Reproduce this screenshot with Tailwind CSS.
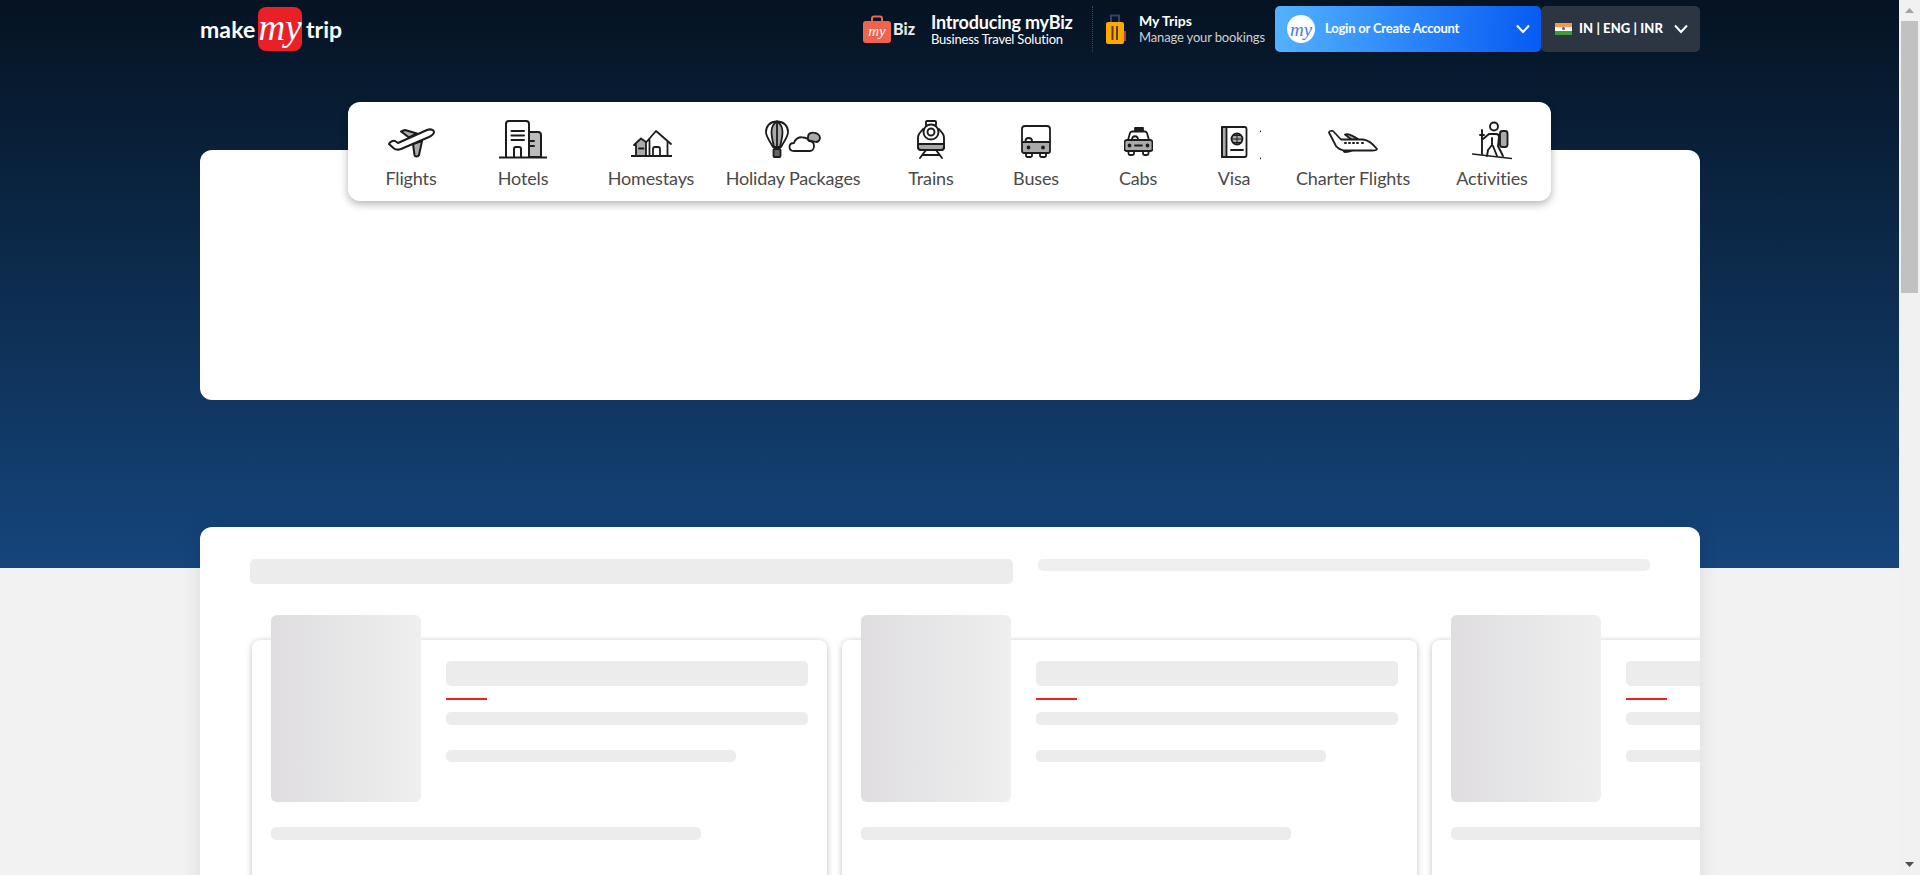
<!DOCTYPE html>
<html lang="en">
<head>
<meta charset="utf-8">
<title>MakeMyTrip</title>
<script src="https://cdn.jsdelivr.net/npm/@tailwindcss/browser@4"></script>
</head>
<body class="overflow-hidden font-['Lato','Noto_Sans',sans-serif]">
<div class="flex h-[875px] w-[1920px] overflow-hidden">
  <main class="h-full w-[1899px] flex-none overflow-hidden bg-[linear-gradient(to_bottom,#051322_0px,#15457c_568px,#f2f2f2_568px)]">
    <div class="ml-[200px] w-[1500px]">
      <header class="flex h-[58px] items-center">
        <a class="flex w-[141px] flex-none items-center text-white">
          <span class="w-[58px] flex-none text-[23px] font-bold leading-none tracking-[0.1px]">make</span>
          <span class="flex h-[44px] w-[44px] flex-none items-center justify-center rounded-[8px] bg-[#eb2026] pb-[3px] font-['Liberation_Serif',serif] text-[37px] font-normal italic leading-none">my</span>
          <span class="ml-[4px] text-[23px] font-bold leading-none">trip</span>
        </a>
        <div class="ml-[522px] flex w-[229px] flex-none items-center">
          <div class="relative h-[28px] w-[28px] flex-none">
            <svg width="28" height="28" viewBox="0 0 28 28"><path d="M9 7V3.500A2 2 0 0 1 11 1.500H17A2 2 0 0 1 19 3.500V7" fill="none" stroke="#f0624e" stroke-width="2"/><rect y="6" width="28" height="22" rx="3" fill="#f0644f"/></svg>
            <span class="absolute inset-x-0 top-[7px] text-center font-['Liberation_Serif',serif] text-[15px] italic leading-[18px] text-white">my</span>
          </div>
          <span class="ml-[2px] w-[38px] flex-none text-[16px] font-black leading-none text-[#e8e8e8]">Biz</span>
          <div class="text-white">
            <div class="text-[18px] font-bold leading-[20px] tracking-[-0.2px] whitespace-nowrap">Introducing myBiz</div>
            <div class="text-[13px] leading-[14px] tracking-[-0.2px] whitespace-nowrap">Business Travel Solution</div>
          </div>
        </div>
        <div class="h-[46px] flex-none border-l border-dotted border-[#3c4a5c]"></div>
        <div class="ml-[13px] flex w-[169px] flex-none items-center">
          <svg class="flex-none" width="20" height="30" viewBox="0 0 20 30"><path d="M5 9V1.500H13V9" fill="none" stroke="#3b3f63" stroke-width="2"/><rect x="18" y="17" width="2" height="10" fill="#b5443c"/><rect y="8" width="18" height="22" rx="2" fill="#fca800"/><path d="M6.500 12V26M11 12V26" stroke="#5a3e1a" stroke-width="2"/></svg>
          <div class="ml-[13px] whitespace-nowrap">
            <div class="text-[14px] font-bold leading-[16px] text-white">My Trips</div>
            <div class="text-[13px] leading-[16px] tracking-[-0.15px] text-[#cfcfcf]">Manage your bookings</div>
          </div>
        </div>
        <button class="flex h-[46px] w-[266px] flex-none items-center rounded-[5px] bg-[linear-gradient(93deg,#53b2fe,#065af3)] pl-[12px] pr-[11px] text-white">
          <span class="flex h-[28px] w-[28px] items-center justify-center rounded-full bg-white font-['Liberation_Serif',serif] text-[19px] italic leading-none text-[#3f80e8]">my</span>
          <span class="ml-[10px] text-[13px] font-bold tracking-[-0.2px]">Login or Create Account</span>
          <svg class="ml-auto" width="14" height="10" viewBox="0 0 14 10"><path d="M1 1.500L7 8L13 1.500" fill="none" stroke="#fff" stroke-width="2"/></svg>
        </button>
        <button class="flex h-[46px] w-[159px] flex-none items-center rounded-[5px] bg-[#2c3642] pl-[14px] text-white">
          <span class="flex h-[13px] w-[17px] flex-col">
            <span class="h-1/3 bg-[#f2994a]"></span>
            <span class="flex h-1/3 items-center justify-center bg-white"><span class="h-[3px] w-[3px] rounded-full bg-[#4a5aa8]"></span></span>
            <span class="h-1/3 bg-[#3f9a3c]"></span>
          </span>
          <span class="ml-[7px] text-[13px] font-black tracking-[0.1px] whitespace-nowrap">IN | ENG | INR</span>
          <svg class="ml-[11px]" width="14" height="10" viewBox="0 0 14 10"><path d="M1 1.500L7 8L13 1.500" fill="none" stroke="#fff" stroke-width="2"/></svg>
        </button>
      </header>

      <nav class="relative z-10 mt-[44px] ml-[148px] -mb-[51px] flex h-[99px] w-[1203px] rounded-[12px] bg-white pt-[18px] text-[18px] leading-[24px] tracking-[-0.15px] text-[#4a4a4a] shadow-[0_3px_8px_rgba(0,0,0,0.3)]">
        <a class="flex w-[126px] flex-col items-center whitespace-nowrap">
          <svg width="48" height="40" viewBox="0 0 48 40" fill="none" stroke="#1c1c1c" stroke-width="2" stroke-linejoin="round" stroke-linecap="round">
            <path d="M14 11.500L18 10L30 13.500L22 17.500Z" fill="#aaa"/>
            <path d="M26 24L35 21L32 35C31 37 28 37 27.500 35Z" fill="#aaa"/>
            <path d="M2 24C3 22 6 20 8 21L11 23L40 10C44 8.500 47 10 47 12C47 14 45 15.500 42 17L14 29C11 30 9 30 7 28.500Z" fill="#fff"/>
          </svg>
          <span class="mt-[6px]">Flights</span>
        </a>
        <a class="flex w-[98px] flex-col items-center whitespace-nowrap">
          <svg width="48" height="40" viewBox="0 0 48 40" fill="none" stroke="#1c1c1c" stroke-width="2" stroke-linecap="round">
            <path d="M30 12H39A3 3 0 0 1 42 15V37H30Z" fill="#bbb"/>
            <path d="M7 37V4A3 3 0 0 1 10 1H27A3 3 0 0 1 30 4V37" fill="#fff"/>
            <path d="M12.500 11H25M12.500 15.500H25M12.500 20H25M31 21H35M31 26H35"/>
            <path d="M15 37V29A2 2 0 0 1 17 27H20A2 2 0 0 1 22 29V37"/>
            <path d="M.5 37.500H47.500"/>
          </svg>
          <span class="mt-[6px]">Hotels</span>
        </a>
        <a class="flex w-[158px] flex-col items-center whitespace-nowrap">
          <svg width="41" height="40" viewBox="0 0 41 40" fill="none" stroke="#1c1c1c" stroke-width="1.800" stroke-linecap="round" stroke-linejoin="round">
            <path d="M5 36V25H3L10 18.500L15 22V36Z" fill="#aaa"/>
            <path d="M8 28.500H12.500"/>
            <path d="M15 22.500L25 11L40 24M18.500 20V36M36.500 21V36"/>
            <path d="M22 36V29A2 2 0 0 1 24 27H27A2 2 0 0 1 29 29V36"/>
            <path d="M.5 36H40.500" stroke-width="2"/>
          </svg>
          <span class="mt-[6px]">Homestays</span>
        </a>
        <a class="flex w-[126px] flex-col items-center whitespace-nowrap">
          <svg width="56" height="40" viewBox="0 0 56 40" fill="none" stroke="#1c1c1c" stroke-width="1.800" stroke-linecap="round" stroke-linejoin="round">
            <path d="M12 1.500C5 1.500 1 6 1 12C1 17 5 21 8 27H16C19 21 23 17 23 12C23 6 19 1.500 12 1.500Z"/>
            <path d="M12 1.500C7.500 4 6.500 8 6.500 12C6.500 17 8 22 9 27H15C16 22 17.500 17 17.500 12C17.500 8 16.500 4 12 1.500Z" fill="#aaa"/>
            <path d="M12 1.500V27"/>
            <rect x="8.500" y="29" width="7" height="8" rx="1" fill="#666"/>
            <path d="M43 17C43 13 47 12 50 13C52 13 55 15 55 18C55 20 53 22 51 22L43 20Z" fill="#aaa"/>
            <path d="M29 31C26 31 24.500 29 24.500 27C24.500 24 27 23 29 23C30 19 34 16.500 38 17.500C41 17.500 43 19 44 21C47 21 49 23 49 26C49 29 47 31 45 31Z" fill="#fff"/>
          </svg>
          <span class="mt-[6px]">Holiday Packages</span>
        </a>
        <a class="flex w-[150px] flex-col items-center whitespace-nowrap">
          <svg width="28" height="40" viewBox="0 0 28 40" fill="none" stroke="#1c1c1c" stroke-width="1.900" stroke-linecap="round" stroke-linejoin="round">
            <path d="M9 5V2A1 1 0 0 1 10 1H18A1 1 0 0 1 19 2V5"/>
            <path d="M6 9L2 14C1.500 15 1 17 1 18V27A3 3 0 0 0 4 30H24A3 3 0 0 0 27 27V18C27 17 26.500 15 26 14L22 9"/>
            <path d="M1 24H27V27A3 3 0 0 1 24 30H4A3 3 0 0 1 1 27Z" fill="#aaa"/>
            <circle cx="14" cy="12" r="7.500" fill="#fff"/>
            <circle cx="14" cy="12" r="3.500"/>
            <path d="M9 30L3 38M19 30L25 38M6.500 35H21.500"/>
          </svg>
          <span class="mt-[6px]">Trains</span>
        </a>
        <a class="flex w-[60px] flex-col items-center whitespace-nowrap">
          <svg width="30" height="40" viewBox="0 0 30 40" fill="none" stroke="#1c1c1c" stroke-width="1.800" stroke-linecap="round" stroke-linejoin="round">
            <path d="M5 33V36A1.500 1.500 0 0 0 6.500 37H10A1.500 1.500 0 0 0 11 36V33M19 33V36A1.500 1.500 0 0 0 20.500 37H24A1.500 1.500 0 0 0 25 36V33"/>
            <path d="M1 22H29V31A2 2 0 0 1 27 33H3A2 2 0 0 1 1 31Z" fill="#aaa"/>
            <path d="M1 22V9A3 3 0 0 1 4 6H26A3 3 0 0 1 29 9V22"/>
            <path d="M4.500 22V21C4.500 17 11 17 11 21V22"/>
            <circle cx="7.500" cy="27.500" r="1" fill="#1c1c1c"/><circle cx="22" cy="27.500" r="1" fill="#1c1c1c"/>
          </svg>
          <span class="mt-[6px]">Buses</span>
        </a>
        <a class="flex w-[144px] flex-col items-center whitespace-nowrap">
          <svg width="29" height="40" viewBox="0 0 29 40" fill="none" stroke="#1c1c1c" stroke-width="1.800" stroke-linecap="round" stroke-linejoin="round">
            <rect x="11" y="8" width="8" height="3" fill="#1c1c1c"/>
            <path d="M4.500 31V33.500A1.500 1.500 0 0 0 6 35H8.500A1.500 1.500 0 0 0 10 33.500V31M19 31V33.500A1.500 1.500 0 0 0 20.500 35H23A1.500 1.500 0 0 0 24.500 33.500V31"/>
            <path d="M4 20L6 13A2.500 2.500 0 0 1 8.500 11.500H20.500A2.500 2.500 0 0 1 23 13L25 20"/>
            <path d="M3 20H26A2.500 2.500 0 0 1 28.500 22.500V29A2 2 0 0 1 26.500 31H2.500A2 2 0 0 1 .5 29V22.500A2.500 2.500 0 0 1 3 20Z" fill="#aaa"/>
            <path d="M8 20C8 15 14 15 14 20M11 25.500H18"/>
            <circle cx="5.500" cy="25.500" r="1" fill="#1c1c1c"/><circle cx="23.500" cy="25.500" r="1" fill="#1c1c1c"/>
          </svg>
          <span class="mt-[6px]">Cabs</span>
        </a>
        <a class="flex w-[48px] flex-col items-center whitespace-nowrap">
          <svg class="overflow-visible" width="27" height="40" viewBox="0 0 27 40" fill="none" stroke="#1c1c1c" stroke-width="1.800" stroke-linecap="round" stroke-linejoin="round">
            <rect x="1" y="7" width="4.500" height="30" fill="#aaa"/>
            <path d="M1 7H23.500A2 2 0 0 1 25.500 9V35A2 2 0 0 1 23.500 37H1Z"/>
            <circle cx="16" cy="19" r="5.500" fill="#aaa"/>
            <path d="M10.500 19H21.500M16 13.500V24.500M12 15.500H20M12 22.500H20" stroke-width="1"/>
            <path d="M10 30H22"/>
            <path d="M39.500 11V11.800M39.500 38V38.800" stroke-width="1"/>
          </svg>
          <span class="mt-[6px]">Visa</span>
        </a>
        <a class="flex w-[190px] flex-col items-center whitespace-nowrap">
          <svg width="50" height="40" viewBox="0 0 50 40" fill="none" stroke="#1c1c1c" stroke-width="1.800" stroke-linecap="round" stroke-linejoin="round">
            <path d="M17 14.500C19 13.500 22 14 30 19L24 20Z" fill="#aaa"/>
            <path d="M16 27L30 26C28 29 22 32 17 32C15 32 15 29 16 27Z" fill="#aaa"/>
            <path d="M1 12.500C1 11 3 10.500 5 11L13 19.500H35C40 20 45 24 49 29C49 30 47 30.500 44 30.500H18C13 30.500 10 28.500 8 26Z" fill="#fff"/>
            <path d="M17 23H18M21 23H22M25 23H26M29 23H30M34 23H35" stroke-width="2"/>
          </svg>
          <span class="mt-[6px]">Charter Flights</span>
        </a>
        <a class="flex w-[88px] flex-col items-center whitespace-nowrap">
          <svg width="40" height="40" viewBox="0 0 40 40" fill="none" stroke="#1c1c1c" stroke-width="1.900" stroke-linecap="round" stroke-linejoin="round">
            <rect x="28" y="11" width="7.500" height="16" rx="2.500" fill="#aaa"/>
            <circle cx="22" cy="6.500" r="4"/>
            <path d="M10 10V34M8 15H12"/>
            <path d="M11 19L17 14H24C26 14 27 15 27 17L26 26L31 36M20 18V25L16 30L15 36M21 26L25 36"/>
            <path d="M.5 34L39.500 38.500" stroke-width="1.500"/>
          </svg>
          <span class="mt-[6px]">Activities</span>
        </a>
      </nav>

      <section class="h-[250px] rounded-[12px] bg-white"></section>

      <section class="mt-[127px] h-[700px] overflow-hidden rounded-[12px] bg-white pt-[32px] shadow-[0_0_20px_rgba(0,0,0,0.1)]">
        <div class="ml-[50px] flex items-start">
          <div class="h-[25px] w-[763px] rounded-[5px] bg-[#ececec]"></div>
          <div class="ml-[25px] h-[12px] w-[612px] rounded-[5px] bg-[#efefef]"></div>
        </div>
        <div class="mt-[56px] flex gap-[15px] pl-[52px]">
          <article class="h-[300px] w-[575px] flex-none rounded-[8px] bg-white pl-[19px] shadow-[0_1px_6px_rgba(0,0,0,0.25)]">
            <div class="flex">
              <div class="-mt-[25px] h-[187px] w-[150px] flex-none rounded-[6px] bg-[linear-gradient(90deg,#dfdde0,#efefef)]"></div>
              <div class="ml-[25px] w-[362px] pt-[21px]">
                <div class="h-[25px] rounded-[5px] bg-[#ececec]"></div>
                <div class="mt-[12px] h-[2px] w-[41px] bg-[#eb2026]"></div>
                <div class="mt-[12px] h-[13px] rounded-[5px] bg-[#ececec]"></div>
                <div class="mt-[25px] h-[12px] w-[290px] rounded-[5px] bg-[#ececec]"></div>
              </div>
            </div>
            <div class="mt-[25px] h-[13px] w-[430px] rounded-[5px] bg-[#ececec]"></div>
          </article>
          <article class="h-[300px] w-[575px] flex-none rounded-[8px] bg-white pl-[19px] shadow-[0_1px_6px_rgba(0,0,0,0.25)]">
            <div class="flex">
              <div class="-mt-[25px] h-[187px] w-[150px] flex-none rounded-[6px] bg-[linear-gradient(90deg,#dfdde0,#efefef)]"></div>
              <div class="ml-[25px] w-[362px] pt-[21px]">
                <div class="h-[25px] rounded-[5px] bg-[#ececec]"></div>
                <div class="mt-[12px] h-[2px] w-[41px] bg-[#eb2026]"></div>
                <div class="mt-[12px] h-[13px] rounded-[5px] bg-[#ececec]"></div>
                <div class="mt-[25px] h-[12px] w-[290px] rounded-[5px] bg-[#ececec]"></div>
              </div>
            </div>
            <div class="mt-[25px] h-[13px] w-[430px] rounded-[5px] bg-[#ececec]"></div>
          </article>
          <article class="h-[300px] w-[575px] flex-none rounded-[8px] bg-white pl-[19px] shadow-[0_1px_6px_rgba(0,0,0,0.25)]">
            <div class="flex">
              <div class="-mt-[25px] h-[187px] w-[150px] flex-none rounded-[6px] bg-[linear-gradient(90deg,#dfdde0,#efefef)]"></div>
              <div class="ml-[25px] w-[362px] pt-[21px]">
                <div class="h-[25px] rounded-[5px] bg-[#ececec]"></div>
                <div class="mt-[12px] h-[2px] w-[41px] bg-[#eb2026]"></div>
                <div class="mt-[12px] h-[13px] rounded-[5px] bg-[#ececec]"></div>
                <div class="mt-[25px] h-[12px] w-[290px] rounded-[5px] bg-[#ececec]"></div>
              </div>
            </div>
            <div class="mt-[25px] h-[13px] w-[430px] rounded-[5px] bg-[#ececec]"></div>
          </article>
        </div>
      </section>
    </div>
  </main>
  <aside class="flex h-full w-[21px] flex-none flex-col items-center bg-[#f1f1f1]">
    <div class="flex h-[21px] w-full items-center justify-center">
      <svg width="9" height="5" viewBox="0 0 9 5"><path d="M4.500 0L9 5H0Z" fill="#a3a3a3"/></svg>
    </div>
    <div class="h-[272px] w-[17px] bg-[#c1c1c1]"></div>
    <div class="mt-auto flex h-[21px] w-full items-center justify-center">
      <svg width="9" height="5" viewBox="0 0 9 5"><path d="M0 0H9L4.500 5Z" fill="#505050"/></svg>
    </div>
  </aside>
</div>
</body>
</html>
